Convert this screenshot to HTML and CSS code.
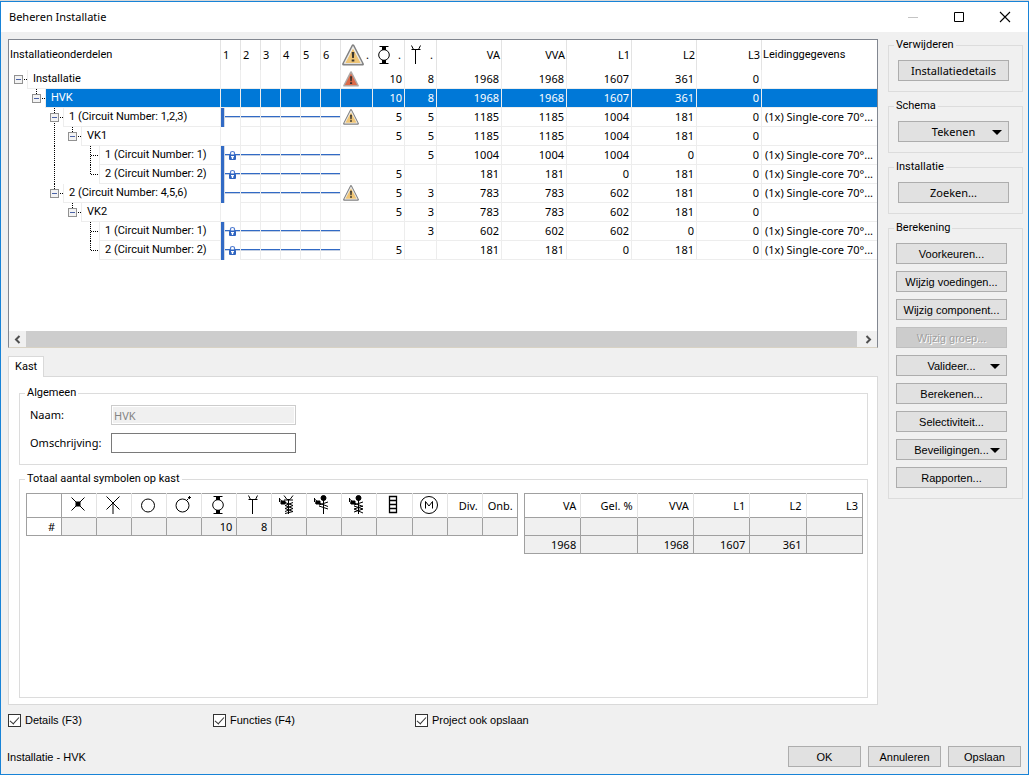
FILE: index.html
```html
<!DOCTYPE html>
<html lang="nl">
<head>
<meta charset="utf-8">
<title>Beheren Installatie</title>
<link rel="stylesheet" href="styles.css">
</head>
<body>
<svg class="defs" aria-hidden="true">
  <symbol id="t-box" viewBox="0 0 18 19"><rect x="5.5" y="5.5" width="8" height="8" rx="1" fill="#f3f3f3" stroke="#919191"/><path d="M7 9.5h5" stroke="#4b63a7"/><path d="M15 9.5h3" stroke="#000" stroke-dasharray="1 1"/></symbol>
  <symbol id="t-up" viewBox="0 0 18 19"><path d="M9.5 0v5" stroke="#000" stroke-dasharray="1 1"/></symbol>
  <symbol id="t-down" viewBox="0 0 18 19"><path d="M9.5 15v4" stroke="#000" stroke-dasharray="1 1"/></symbol>
  <symbol id="t-line" viewBox="0 0 18 19"><path d="M9.5 0v19" stroke="#000" stroke-dasharray="1 1"/></symbol>
  <symbol id="t-tee" viewBox="0 0 18 19"><path d="M9.5 0v19M10 9.5h8" stroke="#000" stroke-dasharray="1 1"/></symbol>
  <symbol id="t-ell" viewBox="0 0 18 19"><path d="M9.5 0v10M10 9.5h8" stroke="#000" stroke-dasharray="1 1"/></symbol>
  <symbol id="warn" viewBox="0 0 20 20"><path d="M10 1.5 18.6 18.3H1.4z" fill="#808080" stroke="#808080" stroke-width="2.6" stroke-linejoin="round"/><path d="M10 2.2 18 17.8H2z" fill="#f6f6f6" stroke="#f6f6f6" stroke-width=".6" stroke-linejoin="round"/><path d="M10 4 17 17.200H3z" fill="#efc576"/><path d="M8.800 7.200h2.400l-.4 5.600H9.200zM8.800 14h2.400v2H8.800z" fill="#3c3830"/></symbol>
  <symbol id="error" viewBox="0 0 20 20"><path d="M10 1.5 18.6 18.3H1.4z" fill="#b0a8a6" stroke="#b0a8a6" stroke-width="2.4" stroke-linejoin="round"/><path d="M10 3 17.6 17.6H2.4z" fill="#dc6a48"/><path d="M8.8 6.5h2.6l-.5 6.2H9.2zM8.8 14h2.6v2.2H8.8z" fill="#3c302c"/></symbol>
  <symbol id="lock" viewBox="0 0 9 11"><path d="M2.500 5V3q0-1.500 2-1.500t2 1.500v2" fill="#fff" stroke="#4f7bd0" stroke-width="1.200"/><rect x="1" y="4.600" width="7" height="5.400" rx="1" fill="#2f64c0"/><path d="M3 6h3v1.200H5.200v1.800H3.800V7.200H3z" fill="#fff"/></symbol>
  <symbol id="s-socket" viewBox="0 0 20 20"><circle cx="10" cy="10" r="5.3"/><path d="M5.500 1.500h9M5.500 18.500h9"/><path d="M8 1h4v4H8zM8 15h4v4H8z" fill="#000" stroke="none"/></symbol>
  <symbol id="s-outlet" viewBox="0 0 20 20"><path d="M5.500.500 7.500 4.500h5L14.500.500M5.500 4.500h9M9.500 5v14"/></symbol>
  <symbol id="s-light" viewBox="0 0 20 20"><path d="M3.500 2.500l13 13M16.500 2.500l-13 13"/><rect x="7.500" y="6.500" width="5" height="5" fill="#000" stroke="none"/></symbol>
  <symbol id="s-star" viewBox="0 0 20 20"><path d="M3.500 1.500l13 13M16.500 1.500l-13 13M10 8v11"/></symbol>
  <symbol id="s-circle" viewBox="0 0 20 20"><circle cx="10" cy="10.500" r="6.500"/></symbol>
  <symbol id="s-circleplus" viewBox="0 0 20 20"><circle cx="9.500" cy="10.500" r="6.500"/><path d="M14 5l1.500-1.500M15 2.500h3M16.500 1v3"/></symbol>
  <symbol id="s-coil-y" viewBox="0 0 20 20"><path d="M6 .5l3 4h3l3-4M6 5h9M10.500 5v14M1 3.500 6 8M1.500 3v4M3 8h5M7 7.500l8 3M7 10.500l8 3M7 13.500l8 3M15 7.500l-8 3M15 10.500l-8 3M15 13.500l-8 3M15 16.500l-8 2"/><path d="M3 6h4v3H3z" fill="#000"/></symbol>
  <symbol id="s-coil-a" viewBox="0 0 20 20"><circle cx="10.500" cy="3" r="2.500" fill="#000"/><path d="M10.500 5v14M1 3.500 6 8M1.500 3v4M2 8h5M6 8l9 3.500M6 11l9 3M15 7l-9 3"/><path d="M3 6h4v3H3z" fill="#000"/></symbol>
  <symbol id="s-coil-b" viewBox="0 0 20 20"><circle cx="10.500" cy="3" r="2.500" fill="#000"/><path d="M10.500 5v14M1 3.500 6 8M1.500 3v4M2 8h5M6 8l9 3.500M6 11l9 3M6 14l9 4M15 7l-9 3M15 11l-9 3M15 14l-9 3"/><path d="M3 6h4v3H3z" fill="#000"/></symbol>
  <symbol id="s-ladder" viewBox="0 0 20 20"><path d="M6.500 1.500h7v16h-7zM6.500 5.500h7M6.500 9.500h7M6.500 13.500h7" stroke-width="1.300"/></symbol>
  <symbol id="s-motor" viewBox="0 0 20 20"><circle cx="10" cy="10" r="8.500"/><path d="M6.500 13.500V6.500L10 11l3.500-4.500v7"/></symbol>
</svg>

<div class="window">
  <header class="titlebar">
    <h1>Beheren Installatie</h1>
    <div class="controls">
      <button type="button" aria-label="Minimaliseren" disabled><svg width="12" height="12"><path d="M1 6.500h10" stroke="#c4c4c4"/></svg></button>
      <button type="button" aria-label="Maximaliseren"><svg width="12" height="12"><path d="M1.500 1.500h9v9h-9z" fill="none" stroke="#000"/></svg></button>
      <button type="button" aria-label="Sluiten"><svg width="12" height="12"><path d="M1 1l10 10M11 1 1 11" stroke="#000" stroke-width="1.100"/></svg></button>
    </div>
  </header>

  <div class="content">
    <main class="main">
      <section class="tree">
        <div class="tree-body">
        <table class="tree-table">
          <colgroup><col class="c-name"><col class="c-phase" span="6"><col class="c-count" span="3"><col class="c-num" span="5"><col></colgroup>
          <thead><tr>
            <th class="name">Installatieonderdelen</th><th class="ph">1</th><th class="ph">2</th><th class="ph">3</th><th class="ph">4</th><th class="ph">5</th><th class="ph">6</th>
            <th><div class="sym"><svg width="22" height="22"><use href="#warn"/></svg>.</div></th>
            <th><div class="sym"><svg class="ink" width="22" height="20"><use href="#s-socket"/></svg>.</div></th>
            <th><div class="sym"><svg class="ink" width="22" height="20"><use href="#s-outlet"/></svg>.</div></th>
            <th class="r">VA</th><th class="r">VVA</th><th class="r">L1</th><th class="r">L2</th><th class="r">L3</th><th class="name">Leidinggegevens</th>
          </tr></thead>
          <tbody>
          <tr class="root"><td><div class="node"><svg class="slot"><use href="#t-box"/></svg><span>Installatie</span></div></td><td></td><td></td><td></td><td></td><td></td><td></td><td class="mark"><svg width="16" height="16"><use href="#error"/></svg></td><td>10</td><td>8</td><td>1968</td><td>1968</td><td>1607</td><td>361</td><td>0</td><td></td></tr>
          <tr class="selected"><td><div class="node"><i class="slot"></i><svg class="slot"><use href="#t-up"/><use href="#t-box"/></svg><span>HVK</span></div></td><td></td><td></td><td></td><td></td><td></td><td></td><td></td><td>10</td><td>8</td><td>1968</td><td>1968</td><td>1607</td><td>361</td><td>0</td><td></td></tr>
          <tr><td><div class="node"><i class="slot"></i><i class="slot"></i><svg class="slot"><use href="#t-up"/><use href="#t-down"/><use href="#t-box"/></svg><span>1 (Circuit Number: 1,2,3)</span></div></td><td class="wire bar"></td><td class="wire"></td><td class="wire"></td><td class="wire"></td><td class="wire"></td><td class="wire"></td><td class="mark"><svg width="16" height="16"><use href="#warn"/></svg></td><td>5</td><td>5</td><td>1185</td><td>1185</td><td>1004</td><td>181</td><td>0</td><td>(1x) Single-core 70°...</td></tr>
          <tr><td><div class="node"><i class="slot"></i><i class="slot"></i><svg class="slot"><use href="#t-line"/></svg><svg class="slot"><use href="#t-up"/><use href="#t-box"/></svg><span>VK1</span></div></td><td></td><td></td><td></td><td></td><td></td><td></td><td></td><td>5</td><td>5</td><td>1185</td><td>1185</td><td>1004</td><td>181</td><td>0</td><td></td></tr>
          <tr><td><div class="node"><i class="slot"></i><i class="slot"></i><svg class="slot"><use href="#t-line"/></svg><i class="slot"></i><svg class="slot"><use href="#t-tee"/></svg><span>1 (Circuit Number: 1)</span></div></td><td class="wire bar"><svg class="lock"><use href="#lock"/></svg></td><td class="wire"></td><td class="wire"></td><td class="wire"></td><td class="wire"></td><td class="wire"></td><td></td><td></td><td>5</td><td>1004</td><td>1004</td><td>1004</td><td>0</td><td>0</td><td>(1x) Single-core 70°...</td></tr>
          <tr><td><div class="node"><i class="slot"></i><i class="slot"></i><svg class="slot"><use href="#t-line"/></svg><i class="slot"></i><svg class="slot"><use href="#t-ell"/></svg><span>2 (Circuit Number: 2)</span></div></td><td class="wire bar"><svg class="lock"><use href="#lock"/></svg></td><td class="wire"></td><td class="wire"></td><td class="wire"></td><td class="wire"></td><td class="wire"></td><td></td><td>5</td><td></td><td>181</td><td>181</td><td>0</td><td>181</td><td>0</td><td>(1x) Single-core 70°...</td></tr>
          <tr><td><div class="node"><i class="slot"></i><i class="slot"></i><svg class="slot"><use href="#t-up"/><use href="#t-box"/></svg><span>2 (Circuit Number: 4,5,6)</span></div></td><td class="wire bar"></td><td class="wire"></td><td class="wire"></td><td class="wire"></td><td class="wire"></td><td class="wire"></td><td class="mark"><svg width="16" height="16"><use href="#warn"/></svg></td><td>5</td><td>3</td><td>783</td><td>783</td><td>602</td><td>181</td><td>0</td><td>(1x) Single-core 70°...</td></tr>
          <tr><td><div class="node"><i class="slot"></i><i class="slot"></i><i class="slot"></i><svg class="slot"><use href="#t-up"/><use href="#t-box"/></svg><span>VK2</span></div></td><td></td><td></td><td></td><td></td><td></td><td></td><td></td><td>5</td><td>3</td><td>783</td><td>783</td><td>602</td><td>181</td><td>0</td><td></td></tr>
          <tr><td><div class="node"><i class="slot"></i><i class="slot"></i><i class="slot"></i><i class="slot"></i><svg class="slot"><use href="#t-tee"/></svg><span>1 (Circuit Number: 1)</span></div></td><td class="wire bar"><svg class="lock"><use href="#lock"/></svg></td><td class="wire"></td><td class="wire"></td><td class="wire"></td><td class="wire"></td><td class="wire"></td><td></td><td></td><td>3</td><td>602</td><td>602</td><td>602</td><td>0</td><td>0</td><td>(1x) Single-core 70°...</td></tr>
          <tr><td><div class="node"><i class="slot"></i><i class="slot"></i><i class="slot"></i><i class="slot"></i><svg class="slot"><use href="#t-ell"/></svg><span>2 (Circuit Number: 2)</span></div></td><td class="wire bar"><svg class="lock"><use href="#lock"/></svg></td><td class="wire"></td><td class="wire"></td><td class="wire"></td><td class="wire"></td><td class="wire"></td><td></td><td>5</td><td></td><td>181</td><td>181</td><td>0</td><td>181</td><td>0</td><td>(1x) Single-core 70°...</td></tr>
          </tbody>
        </table>
        </div>
        <div class="scrollbar">
          <button type="button" aria-label="Naar links"><svg width="7" height="9"><path d="M5.500 1 2 4.500 5.500 8" fill="none" stroke="#505050" stroke-width="2"/></svg></button>
          <div class="thumb"></div>
          <button type="button" aria-label="Naar rechts"><svg width="7" height="9"><path d="M1.500 1 5 4.500 1.500 8" fill="none" stroke="#505050" stroke-width="2"/></svg></button>
        </div>
      </section>

      <section class="tabs">
        <div class="tablist" role="tablist"><button type="button" class="tab" role="tab" aria-selected="true">Kast</button></div>
        <div class="panel" role="tabpanel">
          <fieldset class="general">
            <legend>Algemeen</legend>
            <div class="field"><label for="naam">Naam:</label><input id="naam" type="text" value="HVK" disabled></div>
            <div class="field"><label for="omschrijving">Omschrijving:</label><input id="omschrijving" type="text"></div>
          </fieldset>
          <fieldset class="totals">
            <legend>Totaal aantal symbolen op kast</legend>
            <div class="grids">
              <table class="grid symbols">
                <thead><tr><th></th>
                  <th><svg class="ink"><use href="#s-light"/></svg></th><th><svg class="ink"><use href="#s-star"/></svg></th><th><svg class="ink"><use href="#s-circle"/></svg></th><th><svg class="ink"><use href="#s-circleplus"/></svg></th><th><svg class="ink"><use href="#s-socket"/></svg></th><th><svg class="ink"><use href="#s-outlet"/></svg></th><th><svg class="ink"><use href="#s-coil-y"/></svg></th><th><svg class="ink"><use href="#s-coil-a"/></svg></th><th><svg class="ink"><use href="#s-coil-b"/></svg></th><th><svg class="ink"><use href="#s-ladder"/></svg></th><th><svg class="ink"><use href="#s-motor"/></svg></th>
                  <th>Div.</th><th>Onb.</th></tr></thead>
                <tbody><tr><th scope="row">#</th><td></td><td></td><td></td><td></td><td>10</td><td>8</td><td></td><td></td><td></td><td></td><td></td><td></td><td></td></tr></tbody>
              </table>
              <table class="grid power">
                <thead><tr><th>VA</th><th>Gel. %</th><th>VVA</th><th>L1</th><th>L2</th><th>L3</th></tr></thead>
                <tbody><tr><td></td><td></td><td></td><td></td><td></td><td></td></tr>
                <tr><td>1968</td><td></td><td>1968</td><td>1607</td><td>361</td><td></td></tr></tbody>
              </table>
            </div>
          </fieldset>
        </div>
      </section>
    </main>

    <aside class="side">
      <fieldset><legend>Verwijderen</legend><div class="stack"><button type="button" class="btn">Installatiedetails</button></div></fieldset>
      <fieldset><legend>Schema</legend><div class="stack"><button type="button" class="btn menu">Tekenen</button></div></fieldset>
      <fieldset><legend>Installatie</legend><div class="stack"><button type="button" class="btn">Zoeken...</button></div></fieldset>
      <fieldset class="calc"><legend>Berekening</legend>
        <div class="stack">
        <button type="button" class="btn">Voorkeuren...</button>
        <button type="button" class="btn">Wijzig voedingen...</button>
        <button type="button" class="btn">Wijzig component...</button>
        <button type="button" class="btn" disabled>Wijzig groep...</button>
        <button type="button" class="btn menu">Valideer...</button>
        <button type="button" class="btn">Berekenen...</button>
        <button type="button" class="btn">Selectiviteit...</button>
        <button type="button" class="btn menu">Beveiligingen...</button>
        <button type="button" class="btn">Rapporten...</button>
        </div>
      </fieldset>
    </aside>
  </div>

  <div class="options">
    <label><input type="checkbox" checked>Details (F3)</label>
    <label><input type="checkbox" checked>Functies (F4)</label>
    <label><input type="checkbox" checked>Project ook opslaan</label>
  </div>
  <footer class="footer">
    <p>Installatie - HVK</p>
    <button type="button" class="btn">OK</button>
    <button type="button" class="btn">Annuleren</button>
    <button type="button" class="btn">Opslaan</button>
  </footer>
</div>
</body>
</html>
```

FILE: styles.css
```css
* { box-sizing: border-box; }
body {
  margin: 0;
  background: #d8d8d8;
  padding-top: 1px;
  color: #000;
  font: 11px/16px "Noto Sans", "Open Sans", sans-serif;
}
.defs { position: absolute; width: 0; height: 0; }
button, input { font: inherit; color: inherit; margin: 0; }
fieldset { margin: 0; min-width: 0; border: 1px solid #dcdcdc; padding: 0; }
legend { padding: 0 2px; line-height: 16px; }
legend, .node span, .name { font-family: Roboto, "Liberation Sans", sans-serif; }

.window {
  min-height: calc(100vh - 1px);
  display: flex;
  flex-direction: column;
  background: #f0f0f0;
  border: 1px solid #1883d7;
}
.titlebar {
  display: flex;
  align-items: center;
  justify-content: space-between;
  height: 30px;
  padding-left: 8px;
  background: #fff;
}
.titlebar h1 { margin: 0; font-size: 11px; font-weight: 400; }
.controls { display: flex; }
.controls button {
  width: 46px;
  height: 30px;
  padding: 0;
  border: 0;
  background: none;
  display: grid;
  place-items: center;
}

.content { flex: 1; display: flex; gap: 10px; padding: 7px 5px 0 7px; }
.main { flex: 1; min-width: 0; display: flex; flex-direction: column; gap: 8px; }

/* installation tree */
.tree {
  display: flex;
  flex-direction: column;
  background: #fff;
  border: 1px solid #828790;
  border-bottom-color: #d8d2c4;
}
.tree-body { min-height: 291px; }
.tree-table {
  width: 100%;
  table-layout: fixed;
  border-collapse: separate;
  border-spacing: 0;
  white-space: nowrap;
}
.c-name { width: 212px; }
.c-phase { width: 20px; }
.c-count { width: 32px; }
.c-num { width: 65px; }
.tree-table th {
  height: 30px;
  padding: 0 1px;
  text-align: left;
  font-weight: 400;
  border-right: 1px solid #e3e3e3;
}
.tree-table .ph { padding-left: 2px; }
.tree-table .r { text-align: right; }
.sym { display: flex; align-items: center; justify-content: space-between; padding-right: 2px; }
.ink { fill: none; stroke: #000; stroke-width: 1; width: 20px; height: 20px; }
.tree-table td {
  height: 19px;
  padding: 0 2px;
  line-height: 18px;
  text-align: right;
  border-right: 1px solid #ededed;
  border-bottom: 1px solid #ededed;
}
.tree-table td:first-child { padding: 0; border-bottom: 0; text-align: left; }
.tree-table td:last-child { text-align: left; padding-left: 3px; }
.tree-table th:last-child, .tree-table td:last-child { border-right: 0; }
.node { display: flex; height: 19px; }
.slot { flex: none; width: 18px; height: 19px; shape-rendering: crispEdges; }
.node span {
  flex: 1;
  padding-left: 5px;
  border-left: 1px solid #ededed;
  border-bottom: 1px solid #ededed;
}
.tree-table .mark { text-align: left; }
.mark svg { display: block; }
.selected { color: #fff; }
.selected td:not(:first-child), .selected .node span { background: #0078d7; background-clip: padding-box; }
.tree-table .wire {
  padding: 0;
  background: linear-gradient(#316ac5, #316ac5) 0 8px / 100% 1px no-repeat,
    linear-gradient(#c4cfe2, #c4cfe2) 0 9px / 100% 1px no-repeat;
  background-clip: padding-box;
}
.tree-table .bar {
  border-bottom: 0;
  box-shadow: inset 3px 0 #316ac5, inset 4px 0 #d4d9e2;
}
.lock { display: block; width: 9px; height: 11px; margin-left: 7px; }

.scrollbar { display: flex; height: 16px; background: #f0f0f0; }
.scrollbar button { width: 17px; padding: 0; border: 0; background: none; display: grid; place-items: center; }
.thumb { flex: 1; background: #cdcdcd; margin-right: 3px; }

/* tab panel */
.tabs { flex: 1; display: flex; flex-direction: column; }
.tablist { display: flex; }
.tab {
  height: 21px;
  padding: 0 6px;
  line-height: 18px;
  background: #fff;
  border: 1px solid #d9d9d9;
  border-bottom: 0;
  margin-bottom: -1px;
  position: relative;
  font-family: Roboto, "Liberation Sans", sans-serif;
}
.panel {
  flex: 1;
  display: flex;
  flex-direction: column;
  gap: 6px;
  padding: 8px 9px 6px 10px;
  background: #fff;
  border: 1px solid #d9d9d9;
}
.general { padding: 4px 10px 11px 5px; }
.field { display: flex; align-items: center; margin-left: 5px; }
.field + .field { margin-top: 8px; }
.field label { width: 81px; }
.field input {
  width: 185px;
  height: 20px;
  padding: 0 2px;
  border: 1px solid #7a7a7a;
  background: #fff;
}
.field input:disabled { color: #838383; background: #f0f0f0; border-color: #ccc; box-shadow: inset 0 0 0 1px #fff; }
.totals { flex: 1; padding: 6px 4px 0 5px; }
.grids { display: flex; align-items: flex-start; gap: 6px; margin-left: 1px; }
.grid { table-layout: fixed; border-collapse: collapse; border: 1px solid #a0a0a0; }
.symbols { flex: 492; width: 0; }
.power { flex: 339; width: 0; }
.grid th {
  height: 24px;
  padding: 0 4px 0 0;
  font-weight: 400;
  text-align: right;
  white-space: nowrap;
  border-right: 1px solid #e3e3e3;
}
.grid td, .grid tbody th {
  height: 18px;
  padding: 0 4px 0 0;
  line-height: 16px;
  text-align: right;
  background: #f0f0f0;
  border: 1px solid #a0a0a0;
}
.grid tbody th { background: #fff; padding-right: 6px; }
.grid thead th:last-child, .symbols thead th:first-child { border-right-color: #a0a0a0; }
.grid th svg { display: block; margin: 0 auto; }
.grid thead th:has(svg) { padding: 0 2px 2px 0; }

/* action groups */
.side { flex: 0 0 135px; margin-top: -2px; display: flex; flex-direction: column; gap: 6px; }
.side fieldset { padding: 7px 13px 10px 5px; }
.side .calc { padding-right: 15px; }
.stack { display: flex; flex-direction: column; gap: 7px; margin-left: 4px; }
.calc .stack { margin-left: 2px; }
.btn {
  position: relative;
  display: block;
  width: 100%;
  height: 21px;
  padding: 0;
  line-height: 18px;
  text-align: center;
  background: #e1e1e1;
  border: 1px solid #adadad;
}
.btn:disabled { color: #a0a0a0; background: #ccc; border-color: #bfbfbf; text-shadow: 1px 1px #fff; }
.calc .btn { font-family: "Liberation Sans", Arial, sans-serif; }
.menu::after {
  content: "";
  position: absolute;
  right: 6px;
  top: 8px;
  border: 5px solid transparent;
  border-top-color: #000;
  border-bottom: 0;
}

.options { display: grid; grid-template-columns: 205px 202px 1fr; padding: 7px 7px 0; }
.options, .footer { font-family: "Liberation Sans", Arial, sans-serif; }
.options label { display: flex; align-items: center; gap: 4px; }
.options input {
  appearance: none;
  width: 13px;
  height: 13px;
  border: 1px solid #333;
  background: #fff;
  display: grid;
  place-items: center;
}
.options input:checked::before {
  content: "";
  width: 8px;
  height: 4px;
  border: solid #333;
  border-width: 0 0 1px 1px;
  transform: translateY(-1px) rotate(-48deg);
}
.footer { display: flex; align-items: center; gap: 7px; padding: 18px 7px 7px 6px; }
.footer p { flex: 1; margin: 0; }
.footer .btn { flex: 0 0 73px; }
```
